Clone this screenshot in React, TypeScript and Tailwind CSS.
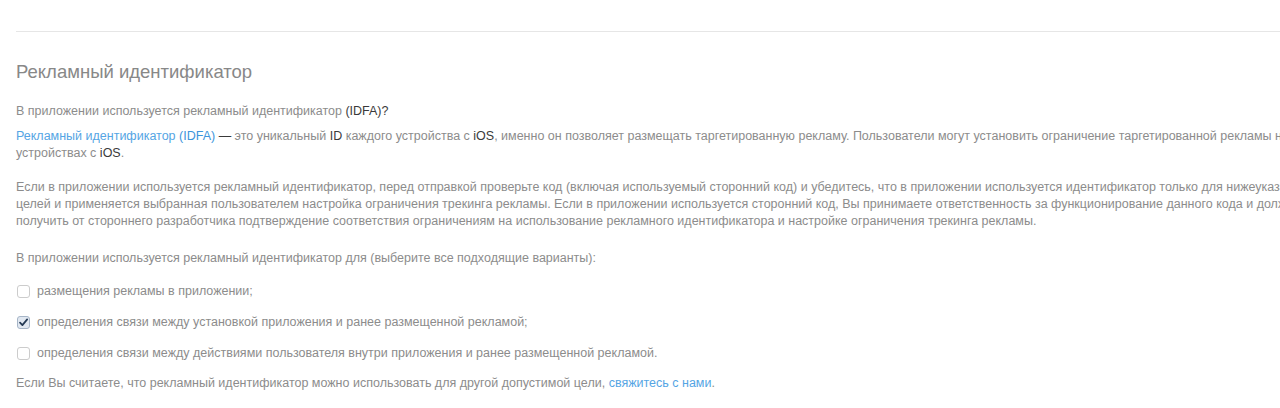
import React from 'react';

const font = { fontFamily: '"Liberation Sans", Arial, sans-serif' };

function Check({ checked }: { checked?: boolean }) {
  return (
    <span
      className={
        'inline-flex h-[13px] w-[13px] shrink-0 items-center justify-center rounded-[3px] border ' +
        (checked ? 'border-[#a6b5c7] bg-[#e1e8f1]' : 'border-[#cccccc] bg-white')
      }
    >
      {checked && (
        <svg viewBox="0 0 12 12" className="h-[11px] w-[11px]">
          <path d="M2.2 6.2 L4.8 8.8 L10 2.6" fill="none" stroke="#243a55" strokeWidth="1.9" strokeLinecap="round" strokeLinejoin="round" />
        </svg>
      )}
    </span>
  );
}

const options = [
  { label: 'размещения рекламы в приложении;', checked: false },
  { label: 'определения связи между установкой приложения и ранее размещенной рекламой;', checked: true },
  { label: 'определения связи между действиями пользователя внутри приложения и ранее размещенной рекламой.', checked: false },
];

export default function App() {
  return (
    <div className="h-[408px] w-[1280px] overflow-hidden bg-white text-[12.5px] leading-[17px] text-[#8c8c8c]" style={font}>
      <div className="ml-[16px] pt-[31px]">
        <div className="h-px bg-[#e6e6e6]" />

        <h2 className="mt-[28px] text-[18.5px] font-normal leading-[24px] text-[#888888]">Рекламный идентификатор</h2>

        <p className="mt-[19px] whitespace-nowrap">
          В приложении используется рекламный идентификатор <span className="text-[#3a3a3a]">(IDFA)?</span>
        </p>

        <p className="mt-[8px] whitespace-nowrap">
          <span className="text-[#55a5e4]">
            Рекламный идентификатор <span className="text-[#3d95dc]">(IDFA)</span>
          </span>{' '}
          <span className="text-[#3a3a3a]">—</span> это уникальный <span className="text-[#3a3a3a]">ID</span> каждого устройства с{' '}
          <span className="text-[#3a3a3a]">iOS</span>, именно он позволяет размещать таргетированную рекламу. Пользователи могут установить ограничение таргетированной рекламы на
          <br />
          устройствах с <span className="text-[#3a3a3a]">iOS</span>.
        </p>

        <p className="mt-[17px] whitespace-nowrap">
          Если в приложении используется рекламный идентификатор, перед отправкой проверьте код (включая используемый сторонний код) и убедитесь, что в приложении используется идентификатор только для нижеуказанных
          <br />
          целей и применяется выбранная пользователем настройка ограничения трекинга рекламы. Если в приложении используется сторонний код, Вы принимаете ответственность за функционирование данного кода и должны
          <br />
          получить от стороннего разработчика подтверждение соответствия ограничениям на использование рекламного идентификатора и настройке ограничения трекинга рекламы.
        </p>

        <p className="mt-[20px] whitespace-nowrap">
          В приложении используется рекламный идентификатор для (выберите все подходящие варианты):
        </p>

        <div className="mt-[16px] flex flex-col gap-[14px]">
          {options.map((o) => (
            <label key={o.label} className="flex items-center gap-[7px] whitespace-nowrap pl-px">
              <Check checked={o.checked} />
              <span>{o.label}</span>
            </label>
          ))}
        </div>

        <p className="mt-[13px] whitespace-nowrap">
          Если Вы считаете, что рекламный идентификатор можно использовать для другой допустимой цели,{' '}
          <span className="text-[#55a5e4]">свяжитесь с нами</span>.
        </p>
      </div>
    </div>
  );
}
